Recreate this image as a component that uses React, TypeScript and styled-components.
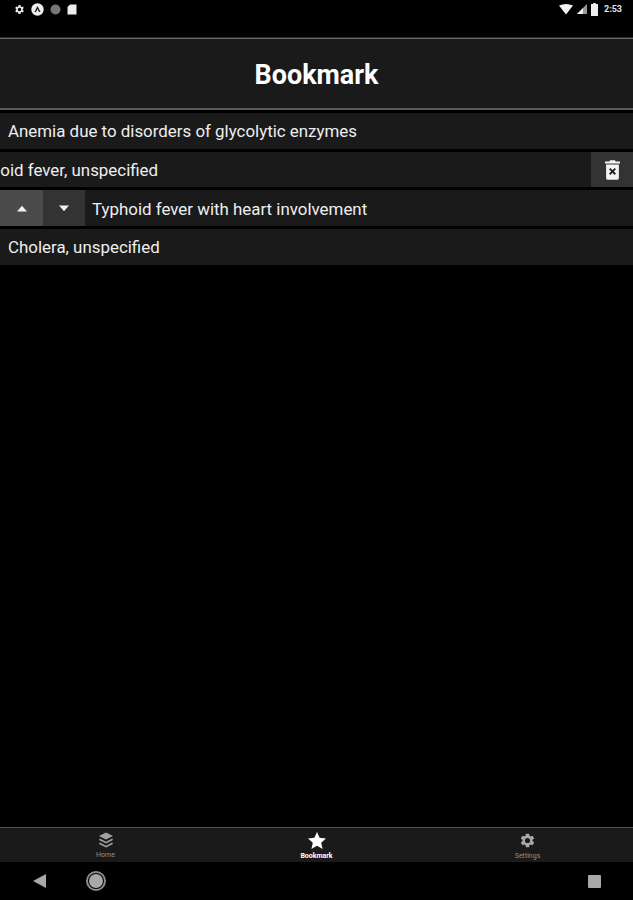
import React from "react";
import styled, { createGlobalStyle } from "styled-components";

const Global = createGlobalStyle`
  html, body { margin: 0; padding: 0; background: #000; }
  #root { width: 633px; height: 900px; }
  * { box-sizing: border-box; }
`;

const Screen = styled.div`
  width: 633px; height: 900px; background: #000; display: flex; flex-direction: column;
  font-family: Roboto, "Liberation Sans", sans-serif; color: #f2f2f2; overflow: hidden;
`;
const StatusBar = styled.div`
  height: 38px; flex: none; display: flex; align-items: flex-start; justify-content: space-between;
  padding: 2px 11px 0 14px; 
`;
const StatusGroup = styled.div<{ $gap: number }>`
  display: flex; align-items: center; gap: ${p => p.$gap}px; height: 14px;
`;
const Clock = styled.span`
  font-size: 9px; font-weight: 700; color: #e4e4e4; margin-left: 2px; line-height: 14px;
`;
const Header = styled.header`
  height: 72px; flex: none; background: #1a1a1a; border-top: 1px solid #6a6a6a; border-bottom: 2px solid #5a5a5a;
  display: flex; align-items: center; justify-content: center;
  box-shadow: 0 -1px 0 #2a2a2a;
`;
const Title = styled.h1`
  margin: 0; padding-top: 3px; font-size: 26.9px; font-weight: 700; color: #fff; line-height: 32px;
`;
const List = styled.div`
  flex: 1; display: flex; flex-direction: column; gap: 3px; padding-top: 3px;
`;
const Row = styled.div<{ $height?: number }>`
  height: ${p => p.$height ?? 36}px; flex: none; background: #1a1a1a; display: flex; align-items: center; overflow: hidden;
`;
const RowText = styled.span<{ $shift?: number; $pad?: number; $low?: boolean }>`
  flex: 1; min-width: 0; white-space: nowrap; font-size: 16.9px; line-height: 37px; color: #eee;
  padding-top: ${p => (p.$low ? 2 : 0)}px;
  padding-left: ${p => p.$pad ?? 8}px; margin-left: ${p => p.$shift ?? 0}px;
`;
const ActionButton = styled.div<{ $bg: string; $w: number }>`
  width: ${p => p.$w}px; height: 100%; flex: none; background: ${p => p.$bg};
  display: flex; align-items: center; justify-content: center;
`;
const TabBar = styled.nav`
  height: 35px; flex: none; background: #1a1a1a; border-top: 1px solid #4e4e4e;
  display: grid; grid-template-columns: repeat(3, 1fr);
`;
const Tab = styled.div<{ $active?: boolean }>`
  display: flex; flex-direction: column; align-items: center; padding-top: 4px;
  color: ${p => (p.$active ? "#fff" : "#8f8f8f")};
`;
const TabLabel = styled.span<{ $active?: boolean }>`
  font-size: 7px; line-height: 8px; margin-top: 3px; font-weight: ${p => (p.$active ? 700 : 400)};
`;
const NavBar = styled.div`
  height: 38px; flex: none; background: #000; display: flex; align-items: center;
  padding: 0 32px; position: relative;
`;
const NavCircle = styled.div`
  width: 18px; height: 18px; border-radius: 50%; background: #a8a8a8; border: 2px solid #000;
  outline: 2px solid #8c8c8c; outline-offset: -1px; margin-left: 41px;
`;
const NavSquare = styled.div`
  width: 13px; height: 13px; background: #a8a8a8; border-radius: 1px; margin-left: auto;
`;

const Gear = ({ size, color }: { size: number; color: string }) => (
  <svg width={size} height={size} viewBox="0 0 24 24" fill={color}>
    <path d="M19.14 12.94c.04-.3.06-.61.06-.94s-.02-.64-.07-.94l2.03-1.58a.49.49 0 0 0 .12-.61l-1.92-3.32a.49.49 0 0 0-.59-.22l-2.39.96a7 7 0 0 0-1.62-.94l-.36-2.54a.48.48 0 0 0-.48-.41h-3.84a.47.47 0 0 0-.47.41l-.36 2.54a7.2 7.2 0 0 0-1.62.94l-2.39-.96a.48.48 0 0 0-.59.22L2.74 8.87a.47.47 0 0 0 .12.61l2.03 1.58c-.05.3-.09.63-.09.94s.02.64.07.94l-2.03 1.58a.49.49 0 0 0-.12.61l1.92 3.32c.12.22.37.29.59.22l2.39-.96c.5.38 1.03.7 1.62.94l.36 2.54c.05.24.24.41.48.41h3.84c.24 0 .44-.17.47-.41l.36-2.54a7 7 0 0 0 1.62-.94l2.39.96c.22.08.47 0 .59-.22l1.92-3.32a.47.47 0 0 0-.12-.61zM12 15.6A3.6 3.6 0 1 1 12 8.4a3.6 3.6 0 0 1 0 7.2z" />
  </svg>
);

const Caret = ({ up }: { up?: boolean }) => (
  <svg width="12" height="7" viewBox="0 0 12 7" fill="#f2f2f2">
    <path d={up ? "M1 6.5 6 .8l5 5.7z" : "M1 .5h10L6 6.2z"} />
  </svg>
);

export default function App() {
  return (
    <Screen>
      <Global />
      <StatusBar>
        <StatusGroup $gap={6}>
          <Gear size={11} color="#e8e8e8" />
          <svg width="13" height="13" viewBox="0 0 13 13">
            <circle cx="6.5" cy="6.5" r="6.2" fill="#eee" />
            <path d="M6.5 3 9.6 9H8L6.5 6 5 9H3.4z" fill="#222" />
          </svg>
          <svg width="11" height="11" viewBox="0 0 11 11"><circle cx="5.5" cy="5.5" r="5" fill="#777" /></svg>
          <svg width="10" height="11" viewBox="0 0 10 11">
            <path d="M3 .5h6.5v10H.5V3z" fill="#eee" />
          </svg>
        </StatusGroup>
        <StatusGroup $gap={4}>
          <svg width="14" height="11" viewBox="0 0 14 11"><path d="M0 1.5Q7-1.5 14 1.5L7 10.5z" fill="#f2f2f2" /></svg>
          <svg width="10" height="10" viewBox="0 0 10 10"><path d="M10 0v10H0z" fill="#999" /><path d="M6 4v6H0z" fill="#eee" /></svg>
          <svg width="7" height="13" viewBox="0 0 7 13"><path d="M2.2 0h2.6v1H7v12H0V1h2.2z" fill="#eee" /></svg>
          <Clock>2:53</Clock>
        </StatusGroup>
      </StatusBar>
      <Header><Title>Bookmark</Title></Header>
      <List>
        <Row><RowText>Anemia due to disorders of glycolytic enzymes</RowText></Row>
        <Row $height={35}>
          <RowText $shift={-44} $low>Typhoid fever, unspecified</RowText>
          <ActionButton $bg="#333333" $w={42}>
            <svg width="15" height="20" viewBox="0 0 16 21">
              <path d="M5.5 0h5l1 1.5H16v2H0v-2h4.5z" fill="#f4f4f4" />
              <path d="M1.2 4.5h13.6V19a2 2 0 0 1-2 2H3.2a2 2 0 0 1-2-2z" fill="#f4f4f4" />
              <path d="m5 9 6 6m0-6-6 6" stroke="#222" strokeWidth="2" />
            </svg>
          </ActionButton>
        </Row>
        <Row>
          <ActionButton $bg="#4a4a4a" $w={43}><Caret up /></ActionButton>
          <ActionButton $bg="#333333" $w={42}><Caret /></ActionButton>
          <RowText $pad={7} $low>Typhoid fever with heart involvement</RowText>
        </Row>
        <Row><RowText>Cholera, unspecified</RowText></Row>
      </List>
      <TabBar>
        <Tab>
          <svg width="16" height="16" viewBox="0 0 16 16" fill="#a0a0a0">
            <path d="M8 .5 15 4 8 7.5 1 4z" />
            <path d="M1.8 6.6 8 9.7l6.2-3.1L15 8l-7 3.5L1 8z" />
            <path d="M1.8 10.6 8 13.7l6.2-3.1.8 1.4-7 3.5L1 12z" />
          </svg>
          <TabLabel>Home</TabLabel>
        </Tab>
        <Tab $active>
          <svg width="18" height="17" viewBox="0 0 18 17" fill="#fff">
            <path d="m9 0 2.6 5.8 6.4.7-4.8 4.2 1.4 6.3L9 13.8 3.4 17l1.4-6.3L0 6.5l6.4-.7z" />
          </svg>
          <TabLabel $active>Bookmark</TabLabel>
        </Tab>
        <Tab>
          <Gear size={17} color="#a8a8a8" />
          <TabLabel>Settings</TabLabel>
        </Tab>
      </TabBar>
      <NavBar>
        <svg width="14" height="14" viewBox="0 0 14 14"><path d="M14 0v14L1 7z" fill="#a8a8a8" /></svg>
        <NavCircle />
        <NavSquare />
      </NavBar>
    </Screen>
  );
}
